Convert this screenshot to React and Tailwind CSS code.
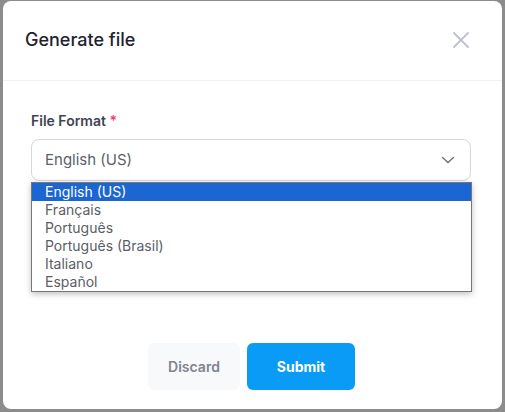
import React from "react";

export default function App() {
  const options = ["English (US)", "Français", "Português", "Português (Brasil)", "Italiano", "Español"];
  return (
    <div className="relative w-[505px] h-[412px] overflow-hidden bg-[#8c8c8c]" style={{ fontFamily: "Inter, 'Noto Sans', sans-serif" }}>
      <div className="absolute left-[3px] top-px w-[499px] h-[408px] rounded-lg bg-white flex flex-col">
        <div className="h-[80px] flex items-center justify-between pl-[22px] pr-[32px] border-b border-[#f0f1f3]">
          <div className="text-[18px] font-medium text-[#1e2330] leading-none mt-[-2px]">Generate file</div>
          <svg width="18" height="18" viewBox="0 0 18 18" className="mt-[-2px]">
            <path d="M2 2 L16 16 M16 2 L2 16" stroke="#bcc1ca" strokeWidth="1.8" strokeLinecap="round" />
          </svg>
        </div>
        <div className="pt-[30px] px-[28px]">
          <div className="text-[14px] font-semibold text-[#3f4451] leading-5">
            File Format <span className="text-[#ec3f66]">*</span>
          </div>
          <div className="mt-[8px] w-[440px] h-[42px] rounded-lg border border-[#d4d6da] flex items-center justify-between pl-[13px] pr-[15px]">
            <span className="text-[15px] text-[#5a5f6a]">English (US)</span>
            <svg width="14" height="8" viewBox="0 0 14 8">
              <path d="M1.5 1.5 L7 6.5 L12.5 1.5" stroke="#6b707a" strokeWidth="1.4" fill="none" strokeLinecap="round" strokeLinejoin="round" />
            </svg>
          </div>
        </div>
        <div className="flex-1" />
        <div className="flex justify-center gap-[7px] pb-[19px] pr-[2px]">
          <button className="w-[92px] h-[47px] rounded-md bg-[#f8f9fa] text-[14px] font-semibold text-[#80848e]">Discard</button>
          <button className="w-[108px] h-[47px] rounded-md bg-[#0a9bf6] text-[14px] font-bold text-white">Submit</button>
        </div>
      </div>
      <div className="absolute left-[31px] top-[182px] w-[441px] h-[110px] border border-[#767676] bg-white shadow-[0_2px_6px_rgba(0,0,0,0.25)] flex flex-col">
        {options.map((o, i) => (
          <div
            key={o}
            className={
              i === 0
                ? "h-[18px] leading-[18px] pl-[13px] text-[14px] bg-[#1b66d2] text-white"
                : "h-[18px] leading-[18px] pl-[13px] text-[14px] text-[#5a5e66]"
            }
          >
            {o}
          </div>
        ))}
      </div>
    </div>
  );
}
